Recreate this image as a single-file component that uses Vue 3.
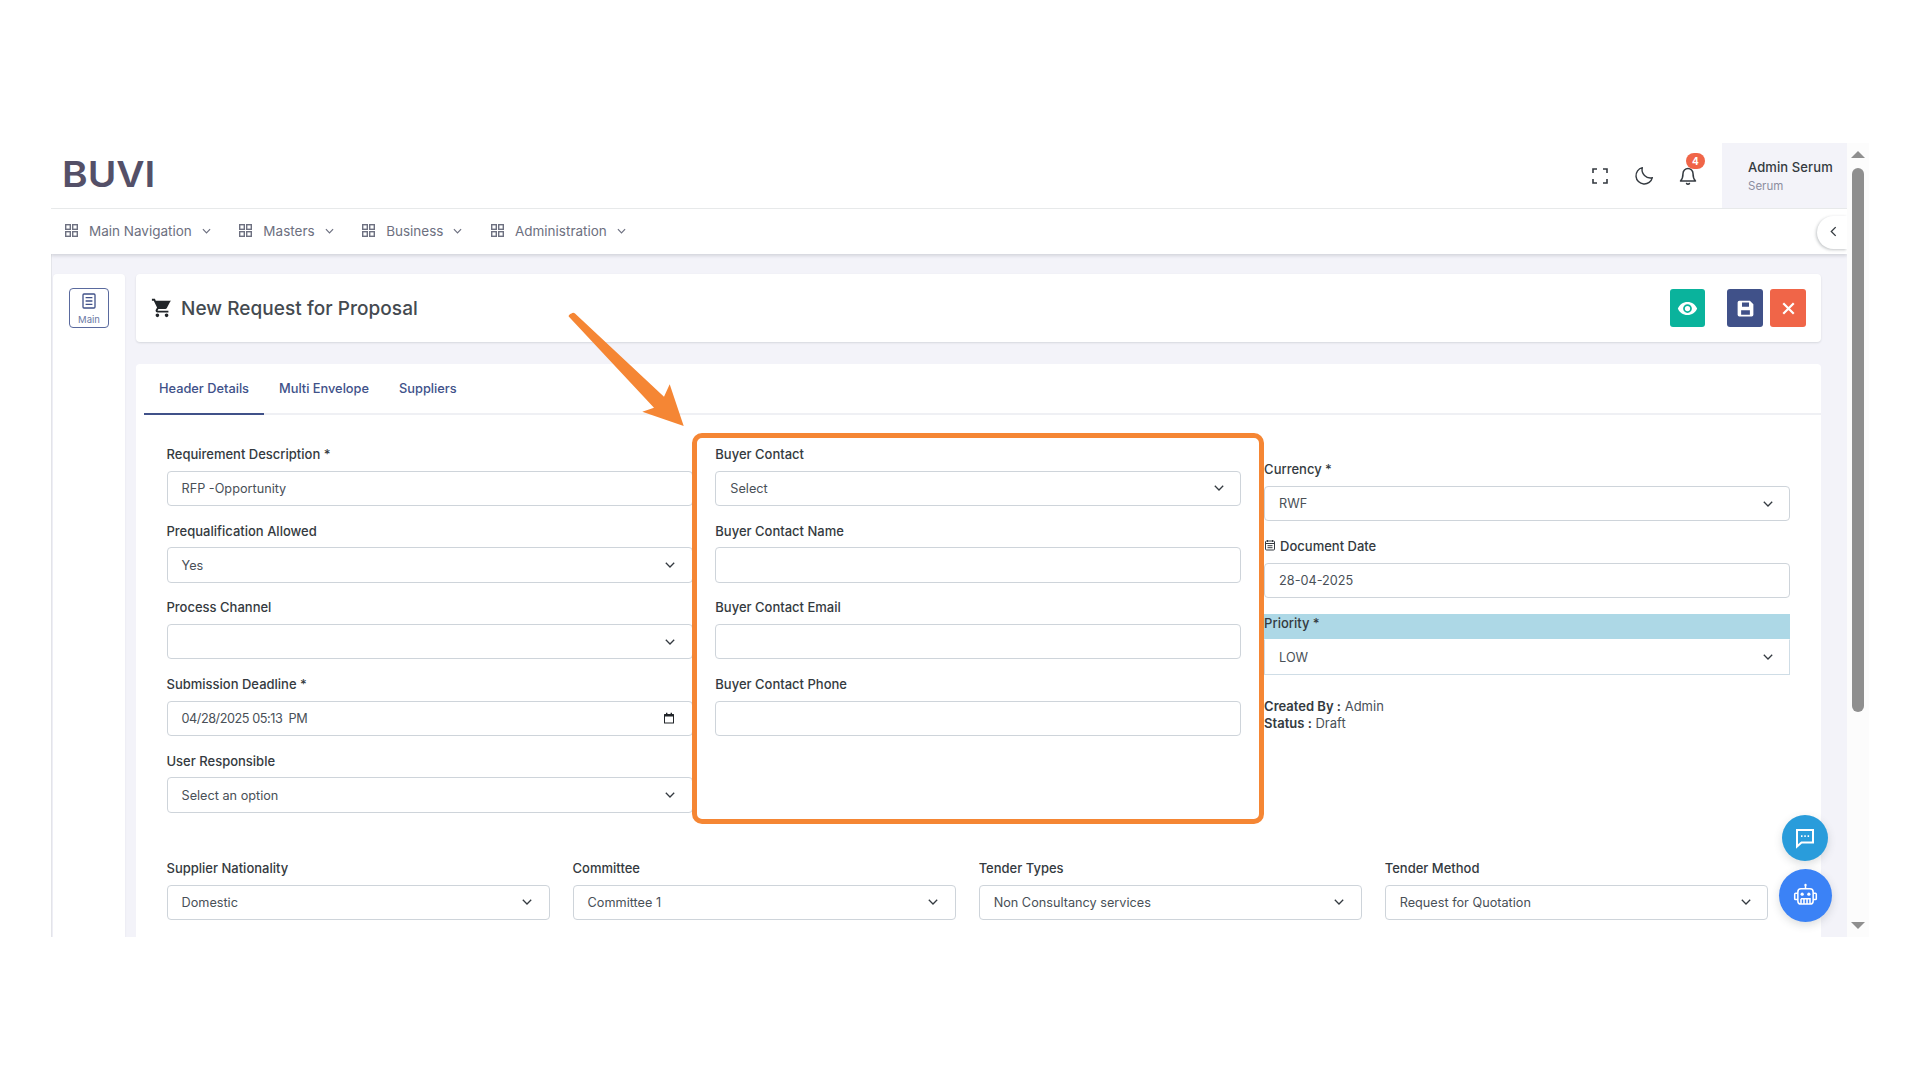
<script setup>
const navItems = [
  { label: 'Main Navigation' },
  { label: 'Masters' },
  { label: 'Business' },
  { label: 'Administration' },
]
const tabs = ['Header Details', 'Multi Envelope', 'Suppliers']
const colOne = [
  { label: 'Requirement Description *', type: 'text', value: 'RFP -Opportunity' },
  { label: 'Prequalification Allowed', type: 'select', value: 'Yes' },
  { label: 'Process Channel', type: 'select', value: '' },
  { label: 'Submission Deadline *', type: 'date', value: '04/28/2025 05:13  PM' },
  { label: 'User Responsible', type: 'select', value: 'Select an option' },
]
const colTwo = [
  { label: 'Buyer Contact', type: 'select', value: 'Select' },
  { label: 'Buyer Contact Name', type: 'text', value: '' },
  { label: 'Buyer Contact Email', type: 'text', value: '' },
  { label: 'Buyer Contact Phone', type: 'text', value: '' },
]
const lower = [
  { label: 'Supplier Nationality', value: 'Domestic' },
  { label: 'Committee', value: 'Committee 1' },
  { label: 'Tender Types', value: 'Non Consultancy services' },
  { label: 'Tender Method', value: 'Request for Quotation' },
]
</script>

<template>
  <div class="shell">
    <div class="viewport">
      <header class="topbar">
        <div class="logo">BUVI</div>
        <div class="top-actions">
          <svg class="ti expand" viewBox="0 0 16 16"><path d="M1 5V1h4M11 1h4v4M15 11v4h-4M5 15H1v-4" /></svg>
          <svg class="ti moon" viewBox="0 0 24 24"><path d="M21 14.5A9.5 9.5 0 0 1 9.5 3 9.5 9.5 0 1 0 21 14.5z" /></svg>
          <div class="bell-wrap">
            <svg class="ti bell" viewBox="0 0 24 24"><path d="M18 9a6 6 0 0 0-12 0c0 6-3 9-3 9h18s-3-3-3-9" /><path d="M13.7 21a2 2 0 0 1-3.4 0" /></svg>
            <span class="badge">4</span>
          </div>
        </div>
        <div class="user">
          <div class="user-name">Admin Serum</div>
          <div class="user-org">Serum</div>
        </div>
      </header>

      <nav class="navbar">
        <div v-for="item in navItems" :key="item.label" class="nav-item">
          <svg class="grid-ic" viewBox="0 0 13 13"><rect x=".7" y=".7" width="4.6" height="4.6" /><rect x="7.7" y=".7" width="4.6" height="4.6" /><rect x=".7" y="7.7" width="4.6" height="4.6" /><rect x="7.7" y="7.7" width="4.6" height="4.6" /></svg>
          <span>{{ item.label }}</span>
          <svg class="nav-chev" viewBox="0 0 10 6"><path d="M1 1l4 4 4-4" /></svg>
        </div>
      </nav>
      <button class="collapse" type="button">
        <svg viewBox="0 0 8 12"><path d="M6.5 1L1.5 6l5 5" /></svg>
      </button>

      <div class="content">
        <aside class="side">
          <div class="side-btn">
            <svg viewBox="0 0 14 16"><rect x="1" y="1" width="12" height="14" rx="1" /><path d="M3.6 4.6h6.8M3.6 8h6.8M3.6 11.4h6.8" /></svg>
            <span>Main</span>
          </div>
        </aside>

        <main class="main">
          <section class="title-card">
            <svg class="cart" viewBox="0 0 24 24"><path d="M17 18a2 2 0 0 1 2 2 2 2 0 0 1-2 2 2 2 0 0 1-2-2c0-1.11.89-2 2-2M1 2h3.27l.94 2H22l-1 1-3.7 6.97c-.34.61-1 1.03-1.75 1.03H8.1l-.9 1.63-.03.12a.25.25 0 0 0 .25.25H19v2H7a2 2 0 0 1-2-2c0-.35.09-.68.24-.96l1.36-2.45L3 4H1V2m6 16a2 2 0 0 1 2 2 2 2 0 0 1-2 2 2 2 0 0 1-2-2c0-1.11.89-2 2-2z" /></svg>
            <h1>New Request for Proposal</h1>
            <div class="actions">
              <button class="act teal" type="button">
                <svg viewBox="0 0 24 24"><path d="M12 9a3 3 0 0 0-3 3 3 3 0 0 0 3 3 3 3 0 0 0 3-3 3 3 0 0 0-3-3m0 8a5 5 0 0 1-5-5 5 5 0 0 1 5-5 5 5 0 0 1 5 5 5 5 0 0 1-5 5m0-12.5C7 4.5 2.73 7.61 1 12c1.73 4.39 6 7.5 11 7.5s9.27-3.11 11-7.5c-1.73-4.39-6-7.5-11-7.5z" /></svg>
              </button>
              <button class="act navy" type="button">
                <svg viewBox="0 0 24 24"><path fill-rule="evenodd" d="M5 3h12l4 4v12a2 2 0 0 1-2 2H5a2 2 0 0 1-2-2V5a2 2 0 0 1 2-2zm3 2v5h8V5H8zm-1 9v5h10v-5H7z" /><rect x="9" y="15.5" width="6" height="2" /></svg>
              </button>
              <button class="act red" type="button">
                <svg viewBox="0 0 24 24"><path class="x" d="M6 6l12 12M18 6L6 18" /></svg>
              </button>
            </div>
          </section>

          <section class="form-card">
            <div class="tabs">
              <div v-for="(t, i) in tabs" :key="t" class="tab" :class="{ active: i === 0 }">{{ t }}</div>
            </div>

            <div class="form-body">
              <div class="top-grid">
                <div class="col">
                  <div v-for="f in colOne" :key="f.label" class="field">
                    <label>{{ f.label }}</label>
                    <div class="control">
                      <span :class="{ datetime: f.type === 'date' }">{{ f.value }}</span>
                      <svg v-if="f.type === 'select'" class="chev" viewBox="0 0 10 6"><path d="M.8.8L5 5 9.2.8" /></svg>
                      <svg v-if="f.type === 'date'" class="cal" viewBox="0 0 12 12"><path d="M1.5 2h9a.5.5 0 0 1 .5.5v8.5a.5.5 0 0 1-.5.5h-9a.5.5 0 0 1-.5-.5V2.500a.5.5 0 0 1 .5-.5zM2 4.500V10.500h8V4.500H2zM3 .7h1.400V2H3zM7.600.7H9V2H7.600z" /></svg>
                    </div>
                  </div>
                </div>

                <div class="col">
                  <div v-for="f in colTwo" :key="f.label" class="field">
                    <label>{{ f.label }}</label>
                    <div class="control">
                      <span>{{ f.value }}</span>
                      <svg v-if="f.type === 'select'" class="chev" viewBox="0 0 10 6"><path d="M.8.8L5 5 9.2.8" /></svg>
                    </div>
                  </div>
                </div>

                <div class="col col-offset">
                  <div class="field">
                    <label>Currency *</label>
                    <div class="control"><span>RWF</span><svg class="chev" viewBox="0 0 10 6"><path d="M.8.8L5 5 9.2.8" /></svg></div>
                  </div>
                  <div class="field">
                    <label class="with-ic"><svg class="cal-label" viewBox="0 0 12 12"><rect x="1.500" y="2" width="9" height="9" rx="1" /><path d="M1.500 4.500h9M3.500 1v2M8.500 1v2M3.500 6.700h5M3.500 8.700h5" /></svg>Document Date</label>
                    <div class="control"><span>28-04-2025</span></div>
                  </div>
                  <div class="field">
                    <label class="hl">Priority *</label>
                    <div class="control flush"><span>LOW</span><svg class="chev" viewBox="0 0 10 6"><path d="M.8.8L5 5 9.2.8" /></svg></div>
                  </div>
                  <div class="meta-block">
                    <div class="meta"><b>Created By :</b> Admin</div>
                    <div class="meta"><b>Status :</b> Draft</div>
                  </div>
                </div>
              </div>

              <div class="lower-grid">
                <div v-for="f in lower" :key="f.label" class="field">
                  <label>{{ f.label }}</label>
                  <div class="control"><span>{{ f.value }}</span><svg class="chev" viewBox="0 0 10 6"><path d="M.8.8L5 5 9.2.8" /></svg></div>
                </div>
              </div>
            </div>
          </section>
        </main>
      </div>

      <!-- annotation overlay -->
      <div class="callout"></div>
      <svg class="arrow" viewBox="0 0 130 125"><path d="M5.500 2.500c1-1 2.500-1 3.500 0L98 85.700l5.700-12.400L117.700 115l-41.400-14.300 11.700-4L2.700 5.500c-.5-1 1-2.300 2.800-3z" /></svg>

      <button class="fab chat" type="button">
        <svg viewBox="0 0 24 24"><path d="M4 4h16v12.500H8.500L4 20.500V4z" /><path class="dots" d="M8 10.200h1.500M11.300 10.200h1.500M14.600 10.200h1.500" /></svg>
      </button>
      <button class="fab robot" type="button">
        <svg viewBox="0 0 30 30"><circle class="solid" cx="15" cy="3.200" r="1.300" /><path d="M15 4v3.500" /><rect x="6.500" y="7.500" width="17" height="17" rx="3.500" /><path d="M6.500 12.500H4a1 1 0 0 0-1 1v5a1 1 0 0 0 1 1h2.500M23.500 12.500H26a1 1 0 0 1 1 1v5a1 1 0 0 1-1 1h-2.500" /><circle class="solid" cx="11.300" cy="13.500" r="1.800" /><circle class="solid" cx="18.700" cy="13.500" r="1.800" /><path d="M10 18.500h10v6M10 18.500v6M13.300 18.500v6M16.700 18.500v6" /></svg>
      </button>
    </div>

    <div class="scrollbar">
      <span class="tri up"></span>
      <span class="thumb"></span>
      <span class="tri down"></span>
    </div>
  </div>
</template>

<style>
html, body { margin: 0; background: #fff; }
</style>

<style scoped>
* { box-sizing: border-box; }
.shell {
  margin: 143px 0 0 51px;
  width: 1818px;
  height: 794px;
  display: flex;
  font-family: Inter, "Noto Sans", sans-serif;
  color: #343a40;
}
.viewport {
  position: relative;
  width: 1796px;
  flex: none;
  display: flex;
  flex-direction: column;
  overflow: hidden;
  background: #f3f3f9;
}
.topbar {
  height: 66px;
  flex: none;
  display: flex;
  align-items: stretch;
  background: #fff;
  border-bottom: 1px solid #e9ebec;
}
.logo {
  align-self: center;
  margin: 0 0 3px 11px;
  font-size: 36px;
  font-weight: 600;
  letter-spacing: 0;
  line-height: 1;
  color: #545068;
  transform: scaleX(1.08);
  transform-origin: left;
}
.top-actions {
  margin-left: auto;
  position: relative;
  width: 130px;
  display: flex;
  align-items: center;
}
.ti { fill: none; stroke: #343a40; stroke-width: 1.8; stroke-linecap: round; stroke-linejoin: round; }
.expand { width: 16px; height: 16px; margin: 0 26px 0 0; stroke-width: 1.6; stroke-linecap: butt; stroke-linejoin: miter; }
.moon { width: 21px; height: 21px; margin-right: 23px; stroke-width: 1.6; }
.bell-wrap { position: relative; width: 20px; height: 20px; }
.bell { width: 20px; height: 20px; display: block; }
.badge {
  position: absolute;
  left: 8px;
  top: -13px;
  width: 19px;
  height: 16px;
  border-radius: 9px;
  background: #f06548;
  color: #fff;
  font-size: 10px;
  font-weight: 700;
  line-height: 16px;
  text-align: center;
}
.user {
  width: 125px;
  background: #f3f3f9;
  padding: 15px 0 0 26px;
}
.user-name { font-size: 13px; font-weight: 500; line-height: 18px; letter-spacing: .1px; color: #343a40; white-space: nowrap; }
.user-org { font-size: 11.500px; line-height: 16px; margin-top: 2px; color: #8c8ea0; }
.navbar {
  height: 45px;
  flex: none;
  display: flex;
  align-items: center;
  padding: 0 0 2px 14px;
  background: #fff;
  box-shadow: 0 2px 3px rgba(56, 65, 74, .16);
  position: relative;
  z-index: 1;
}
.nav-item {
  display: flex;
  align-items: center;
  margin-right: 28.500px;
  font-size: 13.500px;
  color: #6d7080;
}
.grid-ic { width: 13px; height: 13px; margin-right: 11px; fill: none; stroke: #6d7080; stroke-width: 1.400; }
.nav-chev { width: 9px; height: 6px; margin-left: 10px; fill: none; stroke: #6d7080; stroke-width: 1.300; }
.collapse {
  position: absolute;
  z-index: 2;
  top: 73px;
  right: 0;
  width: 30px;
  height: 33px;
  padding: 0 0 0 3px;
  border: 0;
  border-radius: 17px 0 0 17px;
  background: #fff;
  box-shadow: -1px 1px 3px rgba(56, 65, 74, .3);
}
.collapse svg { width: 7px; height: 11px; fill: none; stroke: #343a40; stroke-width: 1.500; }
.content {
  flex: 1;
  min-height: 0;
  display: flex;
  padding: 20px 26px 0 1px;
  gap: 11px;
  border-left: 1px solid #e4e5ea;
}
.side {
  width: 72px;
  flex: none;
  background: #fff;
  border-radius: 4px 4px 0 0;
  padding-top: 14px;
  display: flex;
  justify-content: center;
  align-items: flex-start;
  box-shadow: 0 1px 2px rgba(56, 65, 74, .1);
}
.side-btn {
  width: 40px;
  height: 40px;
  border: 1px solid #5a6a9e;
  border-radius: 4px;
  display: flex;
  flex-direction: column;
  align-items: center;
  padding-top: 4px;
}
.side-btn svg { width: 14px; height: 16px; fill: none; stroke: #405189; stroke-width: 1.300; }
.side-btn span { font-size: 9.500px; line-height: 12px; margin-top: 5px; color: #6a78a4; }
.main { flex: 1; min-width: 0; display: flex; flex-direction: column; gap: 22px; }
.title-card {
  height: 68px;
  flex: none;
  display: flex;
  align-items: center;
  padding: 0 15px 0 15px;
  background: #fff;
  border-radius: 4px;
  box-shadow: 0 1px 2px rgba(56, 65, 74, .15);
}
.cart { width: 22px; height: 22px; margin-right: 8px; fill: #212529; }
h1 { margin: 0; font-size: 19px; font-weight: 500; color: #444a50; letter-spacing: .05px; white-space: nowrap; }
.actions { margin-left: auto; display: flex; }
.act { width: 36px; height: 38px; border: 0; padding: 0; border-radius: 3px; display: flex; align-items: center; justify-content: center; }
.act svg { width: 21px; height: 21px; fill: #fff; }
.teal { background: #0ab39c; margin-right: 22px; width: 35px; }
.navy { background: #405189; margin-right: 7px; }
.navy rect { fill: #405189; }
.red { background: #f06548; }
.act .x { fill: none; stroke: #fff; stroke-width: 2.500; }
.form-card {
  flex: 1;
  background: #fff;
  border-radius: 4px 4px 0 0;
}
.tabs {
  height: 51px;
  margin-left: 8px;
  display: flex;
  border-bottom: 2px solid #eff0f4;
}
.tab {
  height: 51px;
  padding: 0 15px 2px;
  display: flex;
  align-items: center;
  font-size: 12.800px;
  font-weight: 500;
  color: #405189;
  white-space: nowrap;
}
.tab.active { border-bottom: 2px solid #405189; padding-bottom: 0; }
.form-body { padding: 30px 0 0 30.500px; }
.top-grid { display: grid; grid-template-columns: repeat(3, 526px); column-gap: 22.800px; }
.col-offset { padding-top: 15.300px; }
.field { margin-bottom: 15.600px; }
label {
  display: block;
  font-size: 13px;
  font-weight: 500;
  line-height: 18px;
  margin-bottom: 7.600px;
  color: #343a40;
  white-space: nowrap;
}
.with-ic { display: flex; align-items: center; }
.cal-label { width: 12px; height: 12px; margin: 0 4px 2px 0; fill: none; stroke: #343a40; stroke-width: 1; }
.hl { background: #add8e6; margin-bottom: 0; padding-bottom: 7.600px; }
.control {
  height: 35.500px;
  display: flex;
  align-items: center;
  justify-content: space-between;
  padding: 0 14px;
  background: #fff;
  border: 1px solid #ced4da;
  border-radius: 4px;
  font-size: 12.700px;
  color: #495057;
  white-space: pre;
}
.datetime { letter-spacing: -.45px; }
.flush { border-radius: 0; border-color: #cfdde6; border-top-color: #fff; }
.chev { width: 10px; height: 6px; margin-right: 2.500px; fill: none; stroke: #343a40; stroke-width: 1.300; flex: none; }
.cal { width: 12px; height: 12px; margin-right: 2.500px; fill: #212529; flex: none; }
.meta-block { padding-top: 7.500px; }
.meta { font-size: 13px; line-height: 17.500px; color: #495057; }
.meta b { font-weight: 600; color: #343a40; }
.lower-grid {
  margin-top: 30.500px;
  width: 1601.500px;
  display: grid;
  grid-template-columns: repeat(4, 1fr);
  column-gap: 22.800px;
}
.callout {
  position: absolute;
  left: 641px;
  top: 290px;
  width: 572px;
  height: 391px;
  border: 5px solid #f58634;
  border-radius: 10px;
}
.arrow {
  position: absolute;
  left: 515px;
  top: 168px;
  width: 130px;
  height: 125px;
  fill: #f58634;
}
.fab {
  position: absolute;
  border: 0;
  padding: 0;
  border-radius: 50%;
  display: flex;
  align-items: center;
  justify-content: center;
  box-shadow: 0 3px 8px rgba(56, 65, 74, .18);
}
.fab svg { fill: none; stroke: #fff; }
.chat { right: 19px; bottom: 76px; width: 46px; height: 46px; background: #299cdb; }
.chat svg { width: 24px; height: 24px; stroke-width: 2; }
.chat .dots { stroke-width: 1.800; }
.robot { right: 15px; bottom: 15px; width: 53px; height: 53px; background: #3b82f6; }
.robot svg { width: 27px; height: 27px; stroke-width: 1.700; }
.robot .solid { fill: #fff; stroke: none; }
.scrollbar {
  width: 22px;
  flex: none;
  background: #fcfcfc;
  display: flex;
  flex-direction: column;
  padding: 8px 0 8px 4px;
}
.tri { width: 0; height: 0; border-left: 7px solid transparent; border-right: 7px solid transparent; flex: none; }
.up { border-bottom: 7px solid #8f8f8f; }
.down { border-top: 7px solid #8f8f8f; margin-top: 210px; }
.thumb { width: 12px; height: 544px; margin: 10px 0 0 1px; background: #8f8f8f; border-radius: 6px; flex: none; }
</style>
